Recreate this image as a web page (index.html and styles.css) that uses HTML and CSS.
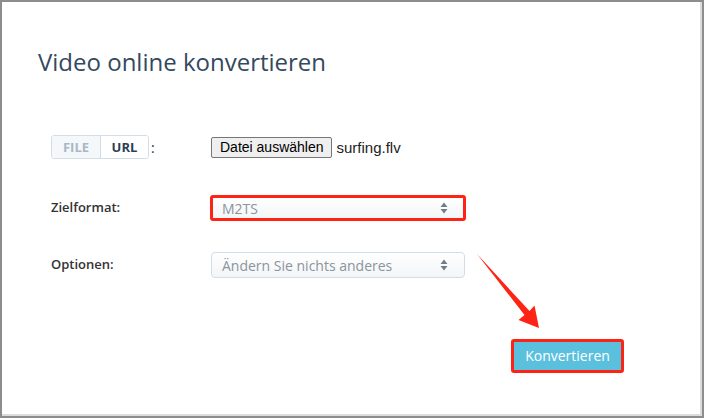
FILE: index.html
```html
<!DOCTYPE html>
<html lang="de">
<head>
<meta charset="utf-8">
<title>Video online konvertieren</title>
<link rel="stylesheet" href="styles.css">
</head>
<body>
<div class="frame">
  <h1 class="title">Video online konvertieren</h1>
  <div class="form">
    <div class="row row-file">
      <div class="label">
        <div class="toggle"><span class="tog tog-file">FILE</span><span class="tog tog-url">URL</span></div><span class="colon">:</span>
      </div>
      <div class="control file-control">
        <span class="file-btn">Datei auswählen</span><span class="file-name">surfing.flv</span>
      </div>
    </div>
    <div class="row row-format">
      <div class="label text-label">Zielformat:</div>
      <div class="control">
        <div class="select select-marked">
          <span class="select-text">M2TS</span>
          <svg class="caret" width="8" height="12" viewBox="0 0 8 12"><path d="M4 0.5 L7.5 5 L0.5 5 Z M4 11.5 L7.5 7 L0.5 7 Z" fill="#6f7c8a"/></svg>
        </div>
      </div>
    </div>
    <div class="row row-options">
      <div class="label text-label">Optionen:</div>
      <div class="control">
        <div class="select">
          <span class="select-text">Ändern Sie nichts anderes</span>
          <svg class="caret" width="8" height="12" viewBox="0 0 8 12"><path d="M4 0.5 L7.5 5 L0.5 5 Z M4 11.5 L7.5 7 L0.5 7 Z" fill="#6f7c8a"/></svg>
        </div>
      </div>
    </div>
    <div class="actions">
      <button class="convert">Konvertieren</button>
    </div>
  </div>
  <svg class="annot" width="704" height="418" viewBox="0 0 704 418">
    <polygon points="477,254 529.5,311 534.5,305.5 539,328 518.5,320 524.5,315" fill="#fd2415"/>
  </svg>
</div>
</body>
</html>
```

FILE: styles.css
```css
* { box-sizing: border-box; }
html, body { margin: 0; padding: 0; background: #ffffff; }
body { font-family: "Open Sans", "Noto Sans", sans-serif; }

.frame {
  position: relative;
  width: 704px;
  height: 418px;
  border: 2px solid #8d8d8d;
  box-shadow: inset -2px -2px 0 #dcdcdc;
  background: #ffffff;
}

.title {
  margin: 0;
  padding: 44px 0 0 36px;
  font-size: 24px;
  line-height: 32px;
  font-weight: 400;
  color: #34495e;
}

.form {
  padding-left: 49px;
}

.row {
  display: flex;
  align-items: flex-start;
  height: 26px;
}
.row-file { margin-top: 56px; align-items: center; }
.row-format { margin-top: 35px; }
.row-options { margin-top: 31px; }

.label {
  width: 160px;
  flex: none;
  display: flex;
  align-items: center;
}
.text-label {
  padding-top: 3px;
  font-size: 13px;
  line-height: 18px;
  font-weight: 600;
  color: #333333;
}

.toggle {
  display: flex;
  height: 24px;
  border: 1px solid #d3dde8;
  border-radius: 3px;
  overflow: hidden;
}
.tog {
  display: flex;
  align-items: center;
  font-size: 13px;
  font-weight: 700;
}
.tog-file {
  width: 49px;
  justify-content: center;
  color: #a9b7c6;
  background: #f5f8fb;
  border-right: 1px solid #d3dde8;
}
.tog-url {
  width: 47px;
  justify-content: center;
  color: #2c3e50;
  background: #ffffff;
}
.colon {
  margin-left: 2px;
  font-size: 14px;
  color: #333333;
}

.control { flex: none; }
.file-control {
  display: flex;
  align-items: center;
  font-family: "Liberation Sans", Arial, sans-serif;
}
.file-btn {
  display: inline-flex;
  align-items: center;
  height: 21px;
  padding: 0 7px 0 8px;
  font-size: 14px;
  color: #000000;
  background: #efefef;
  border: 1px solid #767676;
  border-radius: 2px;
}
.file-name {
  margin-left: 5px;
  font-size: 15px;
  color: #222222;
}

.select {
  display: flex;
  align-items: center;
  justify-content: space-between;
  width: 254px;
  height: 26px;
  padding: 0 16px 0 10px;
  border: 1px solid #d3dde7;
  border-radius: 4px;
  background: linear-gradient(#ffffff, #f3f5f7);
}
.select-marked {
  width: 256px;
  margin-left: -1px;
  padding-left: 9px;
  padding-right: 15px;
  border: 3px solid #fd2415;
  border-radius: 3px;
}
.select-text {
  font-size: 14px;
  color: #8a949e;
}
.caret { display: block; }

.actions {
  display: flex;
  justify-content: flex-end;
  padding-right: 78px;
  margin-top: 61px;
}
.convert {
  width: 113px;
  height: 34px;
  padding: 0;
  border: 3px solid #fd2415;
  border-radius: 3px;
  background: #5bc0de;
  color: #ffffff;
  font-family: "Open Sans", "Noto Sans", sans-serif;
  font-size: 14px;
  line-height: 26px;
}

.annot {
  position: absolute;
  left: -2px;
  top: -2px;
  pointer-events: none;
}
```
